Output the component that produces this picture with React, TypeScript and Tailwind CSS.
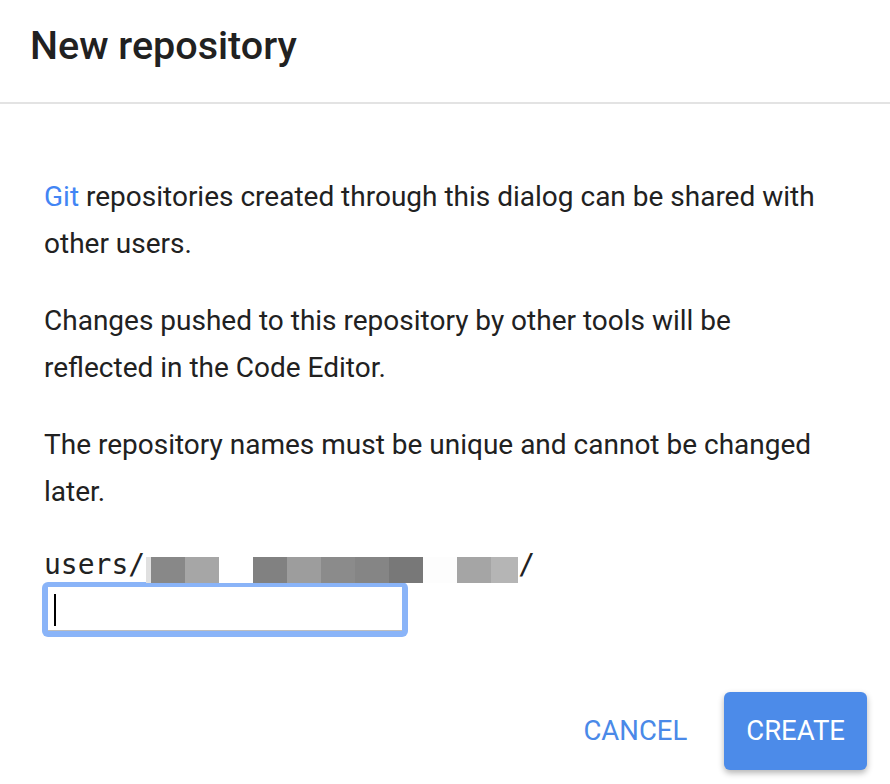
import React from 'react';

// Redacted user name, drawn as grey pixel blocks
const redacted = [
  { w: 'w-[5px]', c: 'bg-[#e0e0e0]' },
  { w: 'w-[34px]', c: 'bg-[#888888]' },
  { w: 'w-[34px]', c: 'bg-[#a6a6a6]' },
  { w: 'w-[34px]', c: 'bg-white' },
  { w: 'w-[34px]', c: 'bg-[#818181]' },
  { w: 'w-[34px]', c: 'bg-[#9d9d9d]' },
  { w: 'w-[34px]', c: 'bg-[#8b8b8b]' },
  { w: 'w-[34px]', c: 'bg-[#858585]' },
  { w: 'w-[34px]', c: 'bg-[#787878]' },
  { w: 'w-[34px]', c: 'bg-[#fdfdfd]' },
  { w: 'w-[34px]', c: 'bg-[#a5a5a5]' },
  { w: 'w-[27px]', c: 'bg-[#b5b5b5]' },
];

export default function App() {
  return (
    <div className="w-[890px] h-[784px] bg-white text-[#212121] font-['Roboto','Liberation_Sans',sans-serif] overflow-hidden">
      {/* Header */}
      <div className="h-[104px] border-b-2 border-[#e3e3e3] pl-[30px] pt-[24px]">
        <h1 className="text-[39.5px] leading-[44px] font-medium">New repository</h1>
      </div>

      {/* Body */}
      <div className="pl-[44px] pt-[69px]">
        <div className="pr-[65px]">
          <p className="text-[28px] leading-[47px] mb-[30px]">
            <span className="text-[#4285f4]">Git</span> repositories created through this dialog can be shared with other users.
          </p>
          <p className="text-[28px] leading-[47px] mb-[30px]">
            Changes pushed to this repository by other tools will be reflected in the Code Editor.
          </p>
          <p className="text-[28px] leading-[47px]">
            The repository names must be unique and cannot be changed later.
          </p>
        </div>

        <div className="mt-[35px] flex items-start h-[30px] font-['DejaVu_Sans_Mono',monospace] text-[28px] leading-[30px] text-[#222]">
          <span>users/</span>
          <div className="flex mt-[7px] h-[26px] ml-[1px]">
            {redacted.map((b, i) => (
              <div key={i} className={`${b.w} h-full ${b.c}`} />
            ))}
          </div>
          <span>/</span>
        </div>

        {/* Focused input */}
        <div className="mt-[2px] -ml-[2px] w-[366px] h-[55px] rounded-[6px] bg-[#8ab4f8] pt-[5px] px-[6px] pb-[6px]">
          <div className="h-full bg-white border-b border-[#bdbdbd] pl-[6px] pt-[7px]">
            <div className="w-[2px] h-[32px] bg-black" />
          </div>
        </div>
      </div>

      {/* Actions */}
      <div className="mt-[55px] flex justify-end items-center pr-[23px] gap-[15px]">
        <button className="h-[78px] px-[22px] text-[27.5px] text-[#4a89e8] uppercase">Cancel</button>
        <button className="h-[78px] px-[22px] rounded-[6px] bg-[#4c8be9] text-white text-[27.5px] uppercase shadow-[0_3px_6px_rgba(0,0,0,0.3)]">
          Create
        </button>
      </div>
    </div>
  );
}
